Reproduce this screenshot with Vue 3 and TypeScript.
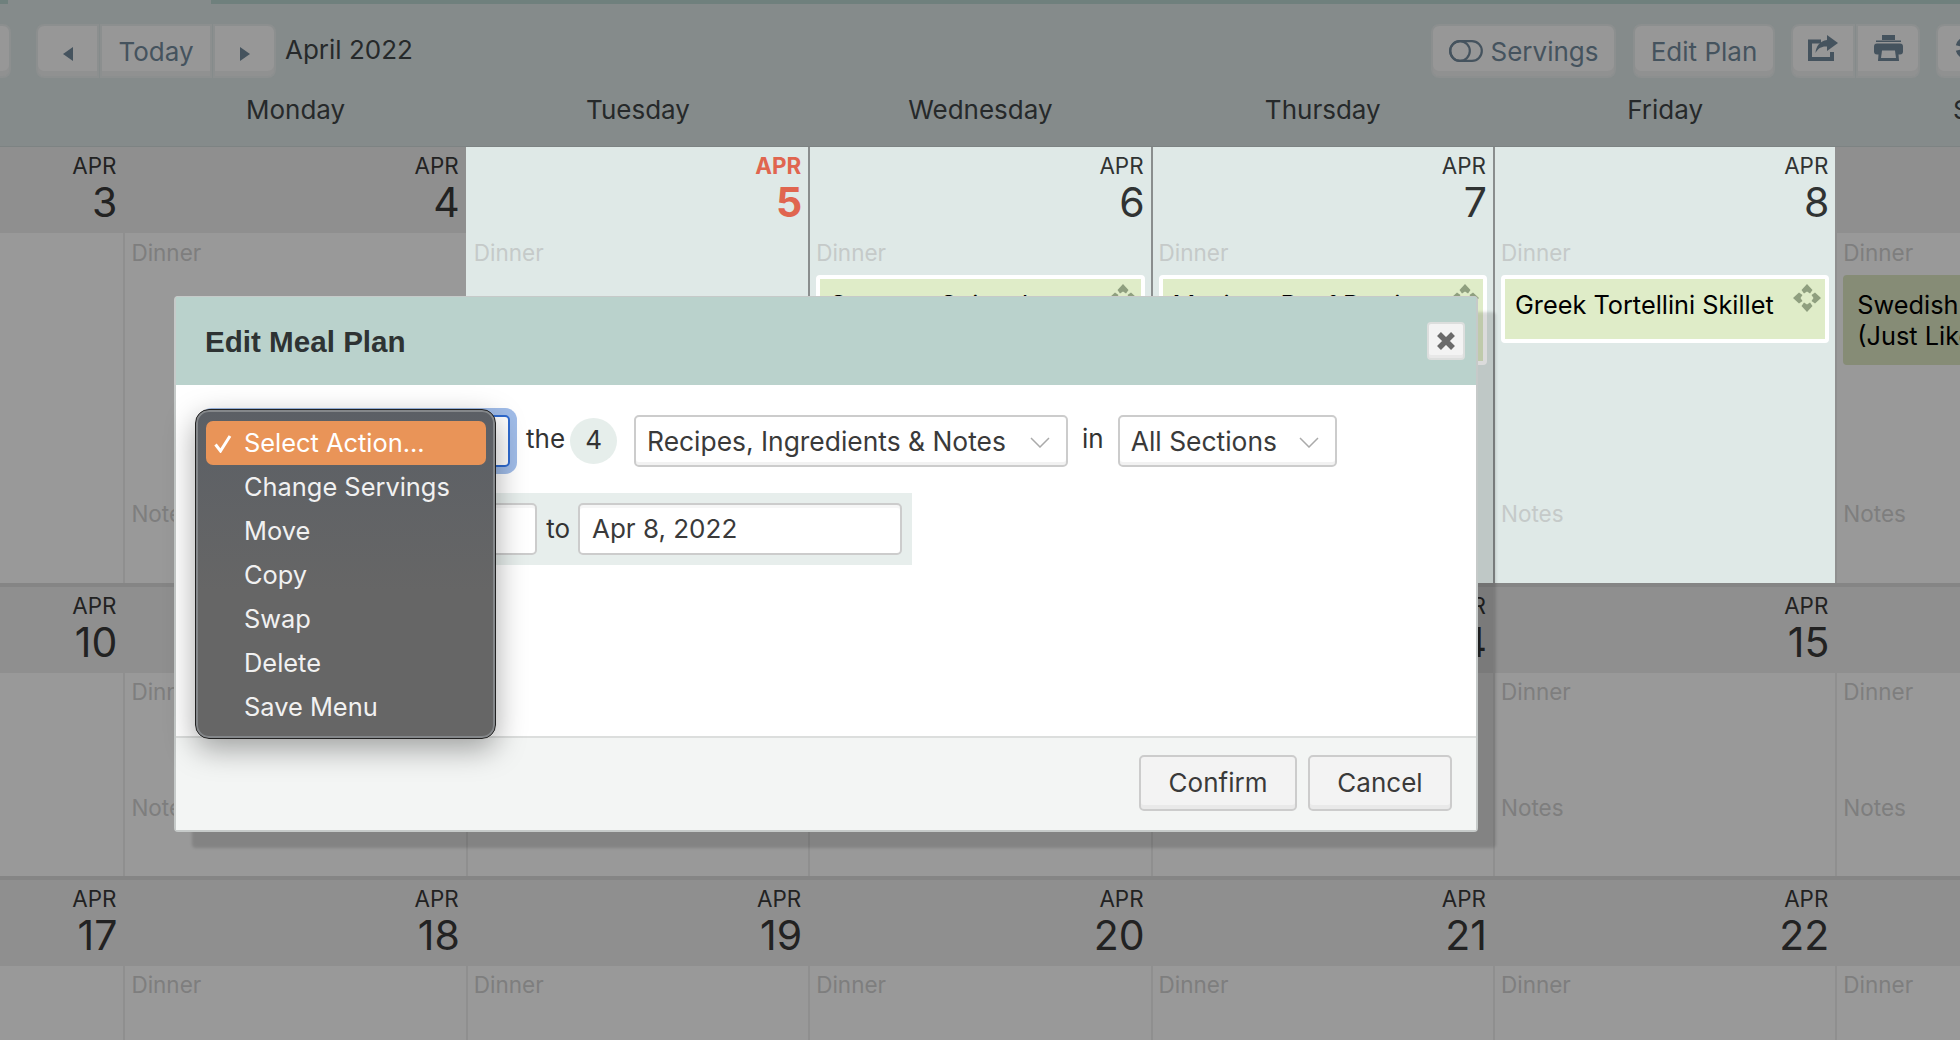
<script setup lang="ts">
interface Day {
  day: number;
  selected?: boolean;
  today?: boolean;
  meal?: string;
}

const weekdays = ['Sunday', 'Monday', 'Tuesday', 'Wednesday', 'Thursday', 'Friday', 'Saturday'];

const weeks: Day[][] = [
  [
    { day: 3 },
    { day: 4 },
    { day: 5, selected: true, today: true },
    { day: 6, selected: true, meal: 'Sausage Spinach Pasta' },
    { day: 7, selected: true, meal: 'Mexican Beef Burrito Casserole' },
    { day: 8, selected: true, meal: 'Greek Tortellini Skillet' },
    { day: 9, meal: 'Swedish Meatballs (Just Like Ikea)' },
  ],
  [10, 11, 12, 13, 14, 15, 16].map((day) => ({ day })),
  [17, 18, 19, 20, 21, 22, 23].map((day) => ({ day })),
];

const actions = ['Change Servings', 'Move', 'Copy', 'Swap', 'Delete', 'Save Menu'];
</script>

<template>
  <div class="page">
    <div class="strip"><span class="strip-tab"></span></div>

    <header class="toolbar">
      <button class="btn btn-cut-left"></button>
      <div class="btn-group nav-group">
        <button class="btn btn-arrow">
          <svg width="10" height="14" viewBox="0 0 10 14"><path d="M10 0V14L0 7Z" /></svg>
        </button>
        <button class="btn btn-today">Today</button>
        <button class="btn btn-arrow">
          <svg width="10" height="14" viewBox="0 0 10 14"><path d="M0 0V14L10 7Z" /></svg>
        </button>
      </div>
      <div class="month">April 2022</div>
      <div class="spacer"></div>
      <button class="btn btn-servings">
        <svg class="toggle" width="34" height="22" viewBox="0 0 34 22">
          <rect x="1.2" y="1.2" width="31.6" height="19.6" rx="9.8" />
          <circle cx="11" cy="11" r="9.8" />
        </svg>
        Servings
      </button>
      <button class="btn btn-edit">Edit Plan</button>
      <div class="btn-group">
        <button class="btn btn-icon">
          <svg width="30" height="26" viewBox="0 0 30 26">
            <path class="line" d="M13 6.5H2V24H24V17" />
            <path d="M19 0L30 8L19 16V11.5C14 11 10 13 7.500 18C8 11 12 6 19 5Z" />
          </svg>
        </button>
        <button class="btn btn-icon">
          <svg width="29" height="26" viewBox="0 0 29 26">
            <rect x="8" y="0" width="13" height="5" />
            <rect x="2" y="5.500" width="25" height="1.500" />
            <rect x="0" y="8.500" width="29" height="11" rx="3" />
            <path d="M5 13H24L25 26H4Z" />
            <path class="paper" d="M8 15.500H21L22 23H7Z" />
          </svg>
        </button>
      </div>
      <button class="btn btn-cut-right">
        <svg width="26" height="26" viewBox="0 0 26 26">
          <circle class="cog" cx="13" cy="13" r="8" />
        </svg>
      </button>
    </header>

    <div class="weekdays">
      <div v-for="name in weekdays" :key="name" class="weekday">{{ name }}</div>
    </div>

    <div class="calendar">
      <section v-for="(week, i) in weeks" :key="i" class="week" :class="{ 'week-first': i === 0 }">
        <div
          v-for="d in week"
          :key="d.day"
          class="day"
          :class="{ selected: d.selected }"
        >
          <div class="day-head" :class="{ today: d.today }">
            <span class="day-month">APR</span>
            <span class="day-num">{{ d.day }}</span>
          </div>
          <div class="day-body">
            <div class="slot slot-dinner">
              <div class="slot-label">Dinner</div>
              <div v-if="d.meal" class="meal">
                <span>{{ d.meal }}</span>
                <svg class="move" width="28" height="28" viewBox="0 0 28 28">
                  <path
                    v-for="r in [0, 90, 180, 270]"
                    :key="r"
                    d="M14 0L19.500 6L17 9.500L14 7.500L11 9.500L8.500 6Z"
                    :transform="`rotate(${r} 14 14)`"
                  />
                </svg>
              </div>
            </div>
            <div class="slot-label">Notes</div>
          </div>
        </div>
      </section>
    </div>

    <div class="modal">
      <div class="modal-head">
        <h2>Edit Meal Plan</h2>
        <button class="close">
          <svg width="20" height="18" viewBox="0 0 20 18">
            <path d="M3 2L17 16M17 2L3 16" />
          </svg>
        </button>
      </div>

      <div class="modal-body">
        <div class="row">
          <div class="select select-action select-focus">Select Action...</div>
          <span class="word the">the</span>
          <span class="count">4</span>
          <div class="select select-type">
            Recipes, Ingredients &amp; Notes
            <svg class="chevron" width="20" height="11" viewBox="0 0 20 11"><path d="M1 1L10 10L19 1" /></svg>
          </div>
          <span class="word in">in</span>
          <div class="select select-section">
            All Sections
            <svg class="chevron" width="20" height="11" viewBox="0 0 20 11"><path d="M1 1L10 10L19 1" /></svg>
          </div>
        </div>

        <div class="date-row">
          <div class="date-input date-from">Apr 5, 2022</div>
          <span class="word to">to</span>
          <div class="date-input date-to">Apr 8, 2022</div>
        </div>

        <ul class="menu">
          <li class="menu-item active">
            <svg class="check" width="18" height="18" viewBox="0 0 18 18"><path d="M1.500 9.500L6.500 16L16 1" /></svg>
            Select Action...
          </li>
          <li v-for="a in actions" :key="a" class="menu-item">{{ a }}</li>
        </ul>
      </div>

      <div class="modal-foot">
        <button class="foot-btn btn-confirm">Confirm</button>
        <button class="foot-btn btn-cancel">Cancel</button>
      </div>
    </div>
  </div>
</template>

<style>
html,
body {
  margin: 0;
  background: #999;
}
</style>

<style scoped>
.page {
  position: relative;
  width: 1960px;
  height: 1040px;
  overflow: hidden;
  background: #999;
  font-family: Inter, 'Liberation Sans', sans-serif;
  font-size: 26px;
  color: #222;
}

button {
  font-family: inherit;
  font-size: inherit;
  padding: 0;
}

.strip {
  height: 4px;
  background: #6f807d;
}

.strip-tab {
  display: block;
  width: 203px;
  height: 4px;
  margin-left: 8px;
  background: #858b8b;
}

.toolbar {
  display: flex;
  align-items: center;
  height: 74px;
  padding-top: 20px;
  box-sizing: border-box;
  background: #858b8b;
}

.btn {
  height: 54px;
  box-sizing: border-box;
  border: 2px solid #8c8f8f;
  border-radius: 8px;
  background: #979797;
  box-shadow: inset 0 -5px 0 #909191;
  color: #45535e;
  flex-shrink: 0;
}

.btn svg {
  fill: #45535e;
}

.btn-cut-left {
  width: 51px;
  margin-left: -40px;
  margin-right: 25px;
}

.btn-cut-right {
  width: 63px;
  margin-left: 16px;
  margin-right: -39px;
  text-align: left;
  padding-left: 16px;
}

.cog {
  fill: none;
  stroke: #45535e;
  stroke-width: 7;
  stroke-dasharray: 5 4;
}

.btn-group {
  display: flex;
}

.btn-group .btn {
  border-radius: 0;
}

.btn-group .btn + .btn {
  margin-left: 1px;
}

.btn-group .btn:first-child {
  border-radius: 8px 0 0 8px;
}

.btn-group .btn:last-child {
  border-radius: 0 8px 8px 0;
}

.btn-arrow {
  width: 63px;
}

.btn-today {
  width: 112px;
}

.month {
  margin-left: 9px;
  margin-bottom: 4px;
  color: #26292a;
}

.spacer {
  flex: 1;
}

.btn-servings {
  width: 185px;
  display: flex;
  align-items: center;
  justify-content: center;
  gap: 8px;
  margin-right: 17px;
}

.btn .toggle {
  fill: none;
  stroke: #45535e;
  stroke-width: 2.2;
}

.btn-edit {
  width: 142px;
  margin-right: 16px;
}

.btn-icon {
  width: 64px;
}

.btn-icon .line {
  fill: none;
  stroke: #45535e;
  stroke-width: 4;
}

.btn-icon .paper {
  fill: #979797;
}

.weekdays,
.week {
  display: grid;
  grid-template-columns: repeat(7, 342.4px);
}

.weekdays {
  height: 69px;
  margin-left: -218px;
  background: #858b8b;
  border-bottom: 1px solid #7d8383;
  box-sizing: border-box;
  width: 2400px;
}

.weekday {
  text-align: center;
  line-height: 64px;
  color: #26292a;
}

.week {
  height: 289px;
  margin-left: -219px;
  border-bottom: 4px solid #858585;
  width: 2400px;
}

.week-first {
  height: 436px;
}

.day {
  display: flex;
  flex-direction: column;
  box-sizing: border-box;
}

.day.selected {
  background: #dfe9e7;
  color: #303333;
}

.day.selected + .day.selected {
  border-left: 2px solid #8a8e8e;
}

.day-head {
  display: flex;
  flex-direction: column;
  align-items: flex-end;
  height: 86px;
  padding: 7px 6px 0 0;
  box-sizing: border-box;
  background: #8f8f8f;
  flex-shrink: 0;
}

.selected .day-head {
  background: transparent;
}

.day-month {
  font-size: 22.400px;
  line-height: 24px;
  margin-right: 1px;
}

.day-num {
  font-size: 41px;
  line-height: 48px;
}

.today .day-month {
  font-weight: 700;
  color: #e0654f;
}

.today .day-num {
  font-weight: 700;
  color: #e0654f;
}

.day-body {
  flex: 1;
  padding: 5px 6px 0 6px;
  border-left: 2px solid #8f8f8f;
}

.week-first .day-body {
  padding-top: 6px;
}

.selected .day-body {
  border-left: 0;
  padding-left: 8px;
}

.day.selected + .day.selected .day-body {
  padding-left: 6px;
}

.slot-dinner {
  height: 116px;
}

.week-first .slot-dinner {
  height: 261px;
}

.slot-label {
  font-size: 22.500px;
  line-height: 28px;
  color: #7e7e7e;
}

.selected .slot-label {
  color: #c5cac9;
}

.meal {
  position: relative;
  box-sizing: border-box;
  min-height: 68px;
  margin-top: 8px;
  padding: 10px 40px 10px 10px;
  border: 4px solid #fff;
  border-radius: 4px;
  background: #dfecc8;
  font-size: 25.300px;
  line-height: 31px;
  color: #000;
}

.day:not(.selected) .meal {
  border-color: #868c76;
  background: #868c76;
}

.move {
  position: absolute;
  top: 5px;
  right: 4px;
  fill: #8f9f7f;
}

.modal {
  position: absolute;
  left: 174px;
  top: 296px;
  width: 1304px;
  height: 536px;
  display: flex;
  flex-direction: column;
  box-sizing: border-box;
  border: 2px solid #c6cac9;
  border-top-width: 1px;
  border-radius: 4px;
  background: #fff;
  box-shadow: 18px 16px 3px rgba(0, 0, 0, 0.14);
  color: #333;
}

.modal-head {
  display: flex;
  align-items: center;
  justify-content: space-between;
  height: 88px;
  padding: 0 11px 0 29px;
  box-sizing: border-box;
  background: #bad2cc;
}

.modal-head h2 {
  margin: 1px 0 0;
  font-family: 'Liberation Sans', sans-serif;
  font-size: 29.600px;
  font-weight: 700;
  color: #2e3333;
}

.close {
  width: 38px;
  height: 38px;
  border: 2px solid #dcdedd;
  border-radius: 4px;
  background: #f3f3f3;
  box-shadow: inset 0 -3px 0 #e8e8e8;
  display: flex;
  align-items: center;
  justify-content: center;
}

.close svg {
  fill: none;
  stroke: #6a6a6a;
  stroke-width: 5.500;
}

.modal-body {
  position: relative;
  flex: 1;
  padding: 30px 0 0 19px;
}

.row {
  display: flex;
  align-items: center;
}

.select {
  position: relative;
  height: 52px;
  box-sizing: border-box;
  border: 2px solid #ccc;
  border-radius: 5px;
  background: #fff;
  box-shadow: inset 0 -3px 0 #f2f2f2;
  font-size: 26.400px;
  line-height: 48px;
  padding-left: 11px;
  color: #3a3a3a;
}

.select-action {
  width: 303px;
  margin-left: 12px;
}

.select-focus {
  border-color: #2f6bd0;
  box-shadow: 0 0 0 7px #a0bce8;
}

.word {
  line-height: 28px;
  margin-bottom: 4px;
}

.the {
  margin-left: 16px;
}

.count {
  width: 47px;
  height: 46px;
  margin: 0 17px 0 5px;
  border-radius: 50%;
  background: #e6eeeb;
  text-align: center;
  line-height: 44px;
}

.select-type {
  width: 434px;
}

.in {
  margin-left: 14px;
  margin-right: 14px;
}

.select-section {
  width: 219px;
}

.chevron {
  position: absolute;
  right: 16px;
  top: 20px;
  fill: none;
  stroke: #aaa;
  stroke-width: 1.500;
}

.date-row {
  display: flex;
  align-items: center;
  width: 713px;
  height: 72px;
  margin-top: 26px;
  margin-left: 4px;
  padding: 0 10px 0 10px;
  box-sizing: border-box;
  background: #e7eeec;
}

.date-input {
  height: 52px;
  box-sizing: border-box;
  border: 2px solid #ccc;
  border-radius: 5px;
  background: #fff;
  box-shadow: inset 0 3px 0 #f6f6f6;
  line-height: 48px;
  padding-left: 12px;
  color: #3a3a3a;
}

.date-from {
  flex: 1;
}

.to {
  margin: 0 8px 0 9px;
}

.date-to {
  width: 324px;
}

.menu {
  position: absolute;
  left: 19px;
  top: 24px;
  width: 301px;
  height: 330px;
  margin: 0;
  padding: 11px 9px 0;
  box-sizing: border-box;
  list-style: none;
  border: 1.500px solid #222;
  border-radius: 14px;
  background: linear-gradient(#5b5f65, #666 55%);
  box-shadow: inset 0 0 0 2px #84878a, 0 10px 30px rgba(0, 0, 0, 0.35);
  font-size: 25.400px;
  color: #f1f1f1;
}

.menu-item {
  position: relative;
  height: 44px;
  margin-left: 1px;
  padding-left: 38px;
  border-radius: 7px;
  line-height: 44px;
}

.menu-item.active {
  background: #e99458;
  color: #fff;
}

.check {
  position: absolute;
  left: 8px;
  top: 14px;
  fill: none;
  stroke: #fff;
  stroke-width: 3;
}

.modal-foot {
  display: flex;
  justify-content: flex-end;
  gap: 11px;
  height: 94px;
  padding: 17px 24px 0 0;
  box-sizing: border-box;
  border-top: 2px solid #dcdedd;
  background: #f3f5f4;
}

.foot-btn {
  height: 56px;
  padding-bottom: 2px;
  box-sizing: border-box;
  border: 2px solid #ccc;
  border-radius: 5px;
  background: #f3f3f3;
  box-shadow: inset 0 -4px 0 #e9e9e9;
  color: #3a3a3a;
}

.btn-confirm {
  width: 158px;
}

.btn-cancel {
  width: 144px;
}
</style>
